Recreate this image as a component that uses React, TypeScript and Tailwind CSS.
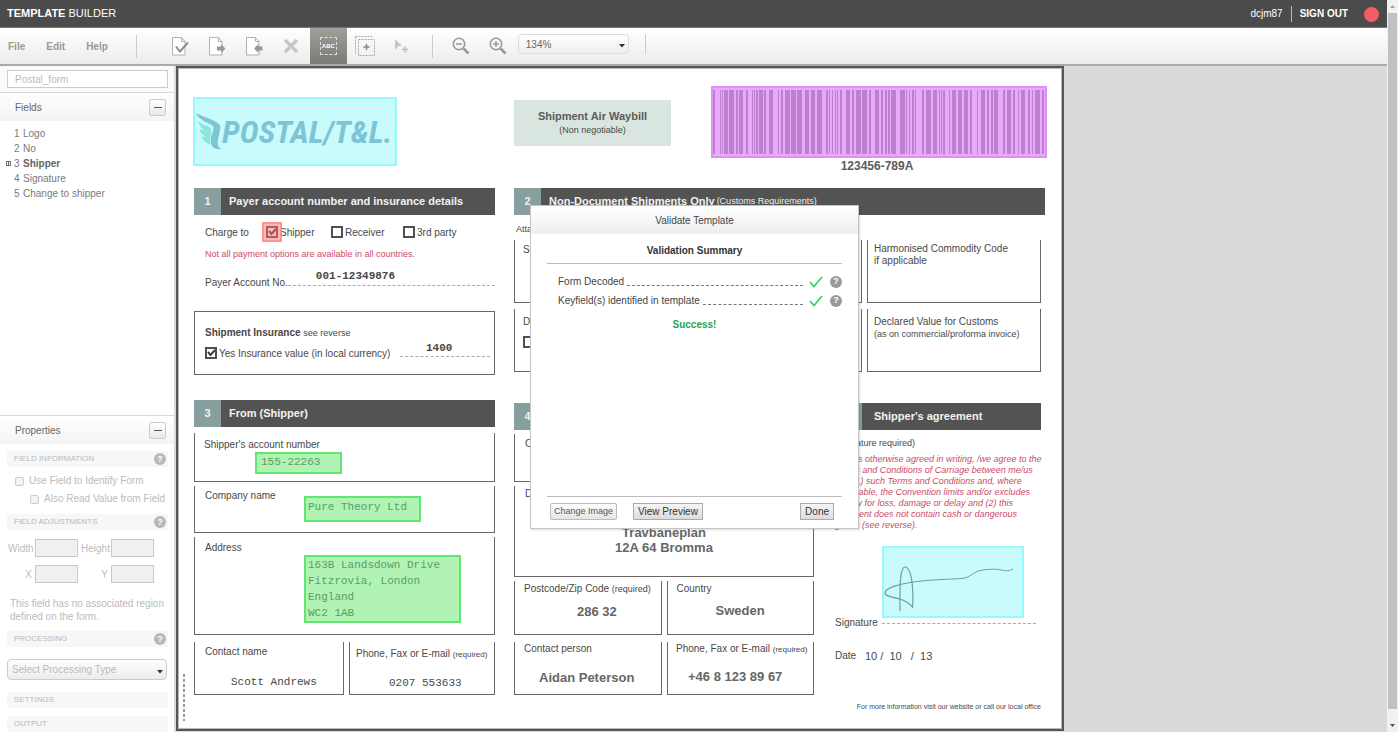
import type { ReactNode } from "react";

const bars: [number, number][] = [
  [1, 2], [8, 1], [10, 1], [12, 4], [17, 5], [24, 2], [27, 4], [34, 2], [40, 1], [42, 1], [44, 2], [47, 4], [52, 2],
  [57, 4], [66, 1], [69, 2], [73, 5], [79, 5], [85, 5], [93, 4], [99, 4], [105, 5], [114, 2], [117, 1], [120, 1],
  [123, 1], [125, 1], [128, 2], [134, 4], [140, 2], [144, 5], [150, 5], [157, 2], [163, 4], [169, 2], [173, 2],
  [176, 2], [179, 5], [188, 5], [194, 1], [197, 1], [200, 2], [203, 1], [210, 2], [214, 5], [221, 4], [227, 1],
  [229, 1], [231, 2], [237, 1], [240, 4], [246, 4], [252, 4], [258, 2], [265, 1], [269, 4], [275, 2], [279, 2],
  [282, 4], [291, 2], [295, 4], [301, 2], [306, 1], [309, 4], [316, 2], [320, 1], [323, 5], [330, 2],
];

function Doc({ children }: { children?: ReactNode }) {
  return (
    <svg width="20" height="20" viewBox="0 0 20 20" fill="none">
      <path d="M2.500 1.500h9l3.500 4v13.500H2.500z" stroke="#b0b0b0" fill="#fff" />
      <path d="M11.500 1.500v4H15" stroke="#b0b0b0" />
      {children}
    </svg>
  );
}

function ToolButton({ label, active, children }: { label: string; active?: boolean; children: ReactNode }) {
  return (
    <button
      type="button"
      aria-label={label}
      className={
        active
          ? "flex w-[37px] items-center justify-center self-stretch bg-linear-to-b from-[#a09f9b] to-[#7b7a75]"
          : "flex w-[37px] items-center justify-center self-stretch"
      }
    >
      {children}
    </button>
  );
}

function Magnifier({ plus }: { plus?: boolean }) {
  return (
    <svg width="18" height="18" viewBox="0 0 18 18" fill="none" stroke="#999">
      <circle cx="7" cy="7" r="5.700" strokeWidth="1.600" />
      <path d="M11.500 11.500l5 5" strokeWidth="2.600" />
      <path d={plus ? "M4 7h6M7 4v6" : "M4 7h6"} strokeWidth="1.500" />
    </svg>
  );
}

function Help({ pale }: { pale?: boolean }) {
  return (
    <button
      type="button"
      aria-label="Help"
      className={
        pale
          ? "flex size-3 shrink-0 items-center justify-center rounded-full bg-[#b8b8b8] text-[9px] font-bold leading-none text-white"
          : "flex size-3 shrink-0 items-center justify-center rounded-full bg-[#999] text-[9px] font-bold leading-none text-white"
      }
    >
      ?
    </button>
  );
}

function Caret() {
  return (
    <svg width="6" height="4" viewBox="0 0 6 4" className="pointer-events-none absolute top-1/2 right-1">
      <path d="M0 0h6L3 3.500z" fill="#333" />
    </svg>
  );
}

function PanelHeader({ title }: { title: string }) {
  return (
    <div className="flex h-7 shrink-0 items-center justify-between bg-linear-to-b from-white to-[#f4f4f4] pr-2 pl-[15px]">
      <h2 className="text-[10px] text-[#666]">{title}</h2>
      <button
        type="button"
        aria-label={`Collapse ${title}`}
        className="flex size-[17px] items-center justify-center rounded-xs border border-[#ccc] bg-linear-to-b from-white to-[#e8e8e8]"
      >
        <span className="h-px w-2 bg-[#555]" />
      </button>
    </div>
  );
}

function GroupBar({ title, help }: { title: string; help?: boolean }) {
  return (
    <div className="mr-[6px] ml-[7px] flex h-4 shrink-0 items-center justify-between bg-[#f7f7f7] pr-[2px] pl-[7px]">
      <h3 className="text-[8px] text-[#b9b9b9]">{title}</h3>
      {help && <Help pale />}
    </div>
  );
}

function SizeInput({ id, label }: { id: string; label: string }) {
  return (
    <>
      <label htmlFor={id} className="text-right">
        {label}
      </label>
      <input id={id} disabled className="h-[18px] w-[43px] border border-[#c8c8c8] bg-[#f0f0f0]" />
    </>
  );
}

function SectionHead({ n, children }: { n: string; children: ReactNode }) {
  return (
    <div className="flex h-[27px] items-stretch bg-[#535353] font-bold text-[#f2f2f2]">
      <span className="flex w-[27px] items-center justify-center bg-[#87a09f] text-[11px]">{n}</span>
      <h2 className="flex items-center gap-[2px] pl-2 text-[11px] whitespace-nowrap">{children}</h2>
    </div>
  );
}

function Cell({ className, children }: { className: string; children?: ReactNode }) {
  return <div className={`border-x border-b border-[#686868] text-[10px] leading-3 ${className}`}>{children}</div>;
}

function Tick({ label, checked, marked }: { label: string; checked?: boolean; marked?: boolean }) {
  return (
    <label className="relative flex items-center whitespace-nowrap">
      <input type="checkbox" defaultChecked={checked} className="peer size-3 appearance-none border-2 border-[#505050]" />
      <svg
        width="10"
        height="10"
        viewBox="0 0 10 10"
        className="pointer-events-none absolute left-[2px] hidden peer-checked:block"
      >
        <path d="M1 4l2.500 3L8 2" stroke="#404040" strokeWidth="2" fill="none" />
      </svg>
      {marked && <span className="absolute -left-1 size-5 border-2 border-[#ff8a8a]/80 bg-[#ff6b6b]/50" />}
      <span className="pl-[2px]">{label}</span>
    </label>
  );
}

function ReportRow({ text }: { text: string }) {
  return (
    <li className="flex items-center">
      <span>{text}</span>
      <span className="mx-[3px] mt-2 flex-1 border-b border-dashed border-[#777]" />
      <svg width="14" height="12" viewBox="0 0 14 12" className="mr-[7px] ml-[3px]">
        <path d="M1 6l4 4.500L13 1" fill="none" stroke="#2fcf55" strokeWidth="1.500" />
      </svg>
      <Help />
    </li>
  );
}

function ValidateDialog() {
  return (
    <div
      role="dialog"
      aria-label="Validate Template"
      className="absolute top-[137px] left-[352px] flex h-[324px] w-[329px] flex-col border border-[#c4c4c4] bg-white text-[10px] text-[#444] shadow-[1px_1px_2px_rgba(0,0,0,0.15)]"
    >
      <h2 className="flex h-7 items-center justify-center bg-linear-to-b from-white to-[#eee]">Validate Template</h2>
      <div className="mx-4 flex flex-1 flex-col">
        <h3 className="border-b border-[#bbb] pt-[9px] pb-[5px] text-center leading-[15px] font-bold text-[#333]">
          Validation Summary
        </h3>
        <ul className="mt-2 ml-[11px] leading-[19px]">
          <ReportRow text="Form Decoded" />
          <ReportRow text="Keyfield(s) identified in template" />
        </ul>
        <p className="mt-[7px] text-center font-bold text-[#22a556]">Success!</p>
      </div>
      <div className="mx-4 flex items-center border-t border-[#bbb] pt-[6px] pb-2 pr-2 pl-[3px] text-[#333]">
        <button
          type="button"
          className="h-[17px] rounded-xs border border-[#bbb] bg-linear-to-b from-white to-[#e4e4e4] px-[3px] text-[9px] text-[#555]"
        >
          Change Image
        </button>
        <button
          type="button"
          className="ml-4 h-[17px] border border-[#aaa] bg-linear-to-b from-[#f6f6f6] to-[#dcdcdc] px-1"
        >
          View Preview
        </button>
        <button
          type="button"
          className="ml-auto h-[17px] border border-[#aaa] bg-linear-to-b from-[#f6f6f6] to-[#dcdcdc] px-1"
        >
          Done
        </button>
      </div>
    </div>
  );
}

function TopBar() {
  return (
    <header className="flex h-7 shrink-0 items-center border-b border-[#777] bg-[#4b4b4b] pr-2 pl-[7px] text-[10px] text-white">
      <h1 className="text-[11px]">
        <b>TEMPLATE</b> BUILDER
      </h1>
      <span className="ml-auto">dcjm87</span>
      <span className="mx-2 h-4 w-px bg-[#bbb]" />
      <a href="#signout" className="font-bold">
        SIGN OUT
      </a>
      <span className="mt-px ml-4 size-[15px] rounded-full bg-[#f45d64]" />
    </header>
  );
}

function Toolbar() {
  return (
    <div className="flex h-[38px] shrink-0 items-center border-b-2 border-[#aaa] bg-linear-to-b from-white to-[#ececec] text-[10px]">
      <nav className="flex gap-[21px] pl-2 font-bold text-[#999]">
        <button type="button">File</button>
        <button type="button">Edit</button>
        <button type="button">Help</button>
      </nav>
      <span className="mr-[25px] ml-7 h-[23px] w-px bg-[#ccc]" />
      <ToolButton label="Validate">
        <Doc>
          <path d="M6 10.500l4 5 8-9" stroke="#8c8c8c" strokeWidth="2" />
        </Doc>
      </ToolButton>
      <ToolButton label="Export">
        <Doc>
          <path d="M10 10.500h4V8l4.500 4.500-4.500 4.500v-2.500h-4z" fill="#999" />
        </Doc>
      </ToolButton>
      <ToolButton label="Import">
        <Doc>
          <path d="M18.500 10.500h-4V8L10 12.500l4.500 4.500v-2.500h4z" fill="#999" />
        </Doc>
      </ToolButton>
      <ToolButton label="Delete">
        <svg width="16" height="16" viewBox="0 0 16 16">
          <path d="M2 2l12 12M14 2L2 14" stroke="#c6c6c6" strokeWidth="3.400" />
        </svg>
      </ToolButton>
      <ToolButton label="Text field" active>
        <span className="flex h-[18px] w-[17px] items-center justify-center border border-dashed border-[#ddd] text-[6px] font-bold text-white">
          ABC
        </span>
      </ToolButton>
      <ToolButton label="Add group">
        <svg width="20" height="20" viewBox="0 0 20 20" fill="none" stroke="#aaa">
          <path d="M.5 .5h18M.5 .5v18" strokeDasharray="2 1" />
          <path d="M3.500 3.500h16v16h-16z" strokeDasharray="2 1" />
          <path d="M8.500 11h6M11.500 8v6" stroke="#888" strokeWidth="1.500" />
        </svg>
      </ToolButton>
      <ToolButton label="Select and add">
        <svg width="16" height="16" viewBox="0 0 16 16">
          <path d="M1 1l7 7H4.500L1 12z" fill="#c4c4c4" />
          <path d="M8 11.500h6M11 8.500v6" stroke="#bbb" strokeWidth="1.500" />
        </svg>
      </ToolButton>
      <span className="mr-[10px] ml-[11px] h-[23px] w-px bg-[#ccc]" />
      <ToolButton label="Zoom out">
        <Magnifier />
      </ToolButton>
      <ToolButton label="Zoom in">
        <Magnifier plus />
      </ToolButton>
      <div className="relative mb-1 ml-px">
        <select
          aria-label="Zoom level"
          className="block h-5 w-[111px] appearance-none rounded border border-[#ddd] bg-linear-to-b from-white to-[#eee] pl-[7px] text-[#666]"
        >
          <option>134%</option>
        </select>
        <Caret />
      </div>
      <span className="mb-1 ml-4 h-5 w-px bg-[#ccc]" />
    </div>
  );
}

function Sidebar() {
  return (
    <aside className="flex w-[174px] shrink-0 flex-col overflow-hidden bg-white text-[10px] text-[#7a7a7a]">
      <div className="border-b border-[#d8d8d8] bg-[#fafafa] px-[7px] py-1">
        <input
          aria-label="Template name"
          defaultValue="Postal_form"
          className="block h-[18px] w-[161px] border border-[#ccc] bg-white pl-[7px] text-[#bbb]"
        />
      </div>
      <PanelHeader title="Fields" />
      <ul className="min-h-0 flex-1 pt-[5px] leading-[15px]">
        {["Logo", "No", "Shipper", "Signature", "Change to shipper"].map((name, i) => (
          <li key={name} className="flex items-center pl-[6px]">
            <span className="w-2">
              {name === "Shipper" && (
                <svg width="5" height="5" viewBox="0 0 5 5">
                  <path d="M.5 .5h4v4h-4zM2.500 1v3" fill="none" stroke="#666" />
                </svg>
              )}
            </span>
            <span className="w-[9px]">{i + 1}</span>
            <span className={name === "Shipper" ? "font-bold text-[#666]" : ""}>{name}</span>
          </li>
        ))}
      </ul>
      <section className="flex h-[317px] shrink-0 flex-col overflow-hidden border-t border-[#d8d8d8] text-[#bbb]">
        <PanelHeader title="Properties" />
        <div className="h-[7px] shrink-0" />
        <GroupBar title="FIELD INFORMATION" help />
        <label className="mt-[5px] flex items-center gap-[5px] pl-[15px] leading-[18px]">
          <input type="checkbox" disabled className="size-[9px] appearance-none rounded-xs border border-[#ccc] bg-[#f4f4f4]" />
          Use Field to Identify Form
        </label>
        <label className="flex items-center gap-[5px] pl-[30px] leading-[18px]">
          <input type="checkbox" disabled className="size-[9px] appearance-none rounded-xs border border-[#ccc] bg-[#f4f4f4]" />
          Also Read Value from Field
        </label>
        <div className="h-[6px] shrink-0" />
        <GroupBar title="FIELD ADJUSTMENTS" help />
        <div className="mt-[9px] grid grid-cols-[24px_43px_27px_43px] items-center gap-x-[3px] gap-y-2 pl-2">
          <SizeInput id="w" label="Width" />
          <SizeInput id="h" label="Height" />
          <SizeInput id="x" label="X" />
          <SizeInput id="y" label="Y" />
        </div>
        <p className="mt-[14px] mb-2 pl-[10px] leading-[13px]">This field has no associated region defined on the form.</p>
        <GroupBar title="PROCESSING" help />
        <div className="relative mx-[7px] my-3">
          <select
            aria-label="Processing type"
            className="block h-[21px] w-full appearance-none rounded border border-[#ccc] bg-linear-to-b from-white to-[#ececec] pl-1 text-[10px] text-[#bbb]"
          >
            <option>Select Processing Type</option>
          </select>
          <Caret />
        </div>
        <GroupBar title="SETTINGS" />
        <div className="h-2 shrink-0" />
        <GroupBar title="OUTPUT" />
      </section>
    </aside>
  );
}

const mono = "[font-family:'Liberation_Mono',monospace]";

function LeftColumn() {
  return (
    <div className="w-[301px] text-[10px]">
      <SectionHead n="1">Payer account number and insurance details</SectionHead>
      <div className="mt-[7px] flex h-5 items-center pl-[11px]">
        <span className="w-[61px]">Charge to</span>
        <span className="w-[65px]">
          <Tick label="Shipper" checked marked />
        </span>
        <span className="w-[72px]">
          <Tick label="Receiver" />
        </span>
        <Tick label="3rd party" />
      </div>
      <p className="mt-[5px] pl-[11px] text-[9px] leading-[14px] text-[#cc4a68]">
        Not all payment options are available in all countries.
      </p>
      <div className="mt-[5px] flex h-[23px] items-end pl-[11px]">
        <span className="leading-3">Payer Account No.</span>
        <span
          className={`mb-[3px] flex-1 border-b border-dashed border-[#aaa] pb-[2px] pl-7 text-[11px] leading-[14px] font-bold ${mono}`}
        >
          001-12349876
        </span>
      </div>
      <div className="mt-[22px] flex h-16 flex-col border border-[#686868] pt-[13px] pl-[10px]">
        <p className="leading-[15px]">
          <b>Shipment Insurance</b> <span className="text-[9px]">see reverse</span>
        </p>
        <div className="mt-[3px] flex h-[18px] items-center pr-1">
          <Tick label="Yes Insurance value (in local currency)" checked />
          <span
            className={`mb-[5px] ml-auto w-[90px] self-end border-b border-dashed border-[#aaa] pb-[2px] pl-[26px] text-[11px] leading-3 font-bold ${mono}`}
          >
            1400
          </span>
        </div>
      </div>
      <div className="h-[25px]" />
      <SectionHead n="3">From (Shipper)</SectionHead>
      <Cell className="mt-[6px] h-[49px] pt-[6px] pl-[9px]">
        Shipper's account number
        <p className={`mt-px ml-[51px] h-[22px] w-[87px] border-2 border-[#63e571] bg-[#b0f3b4] pl-1 text-[11px] leading-4 text-[#5a9e62] ${mono}`}>
          155-22263
        </p>
      </Cell>
      <Cell className="mt-1 flex h-[47px] pt-1 pl-[10px]">
        <span className="w-[99px]">Company name</span>
        <p className={`mt-[6px] h-[26px] w-[117px] border-2 border-[#63e571] bg-[#b0f3b4] pl-[2px] text-[11px] leading-[18px] text-[#5a9e62] ${mono}`}>
          Pure Theory Ltd
        </p>
      </Cell>
      <Cell className="mt-1 flex h-[98px] pt-[5px] pl-[10px]">
        <span className="w-[99px]">Address</span>
        <p className={`mt-[13px] h-[68px] w-[157px] border-2 border-[#63e571] bg-[#b0f3b4] pl-[2px] text-[11px] leading-4 text-[#5a9e62] ${mono}`}>
          163B Landsdown Drive
          <br />
          Fitzrovia, London
          <br />
          England
          <br />
          WC2 1AB
        </p>
      </Cell>
      <div className="mt-[7px] flex gap-[5px]">
        <Cell className="h-[53px] flex-1 pt-1 pl-[10px]">
          Contact name
          <p className={`mt-[18px] pl-[26px] text-[11px] ${mono}`}>Scott Andrews</p>
        </Cell>
        <Cell className="h-[53px] flex-1 pt-[6px] pl-[6px] whitespace-nowrap">
          Phone, Fax or E-mail <span className="text-[8px]">(required)</span>
          <p className={`mt-4 pl-[33px] text-[11px] ${mono}`}>0207 553633</p>
        </Cell>
      </div>
    </div>
  );
}

function GoodsSection() {
  return (
    <section>
      <SectionHead n="2">
        Non-Document Shipments Only <span className="text-[9px] font-normal">(Customs Requirements)</span>
      </SectionHead>
      <p className="mt-2 h-[17px] pl-[2px] text-[9px] leading-3">Attach</p>
      <div className="flex gap-[5px] pr-1">
        <Cell className="h-[63px] flex-1 pt-1 pl-2">Shipment</Cell>
        <Cell className="h-[63px] w-[174px] pt-[3px] pl-[6px]">
          Harmonised Commodity Code
          <br />
          if applicable
        </Cell>
      </div>
      <div className="mt-[6px] flex gap-[5px] pr-1">
        <Cell className="flex h-[63px] flex-1 flex-col gap-2 pt-[7px] pl-2">
          Duties
          <Tick label="Yes" />
        </Cell>
        <Cell className="h-[63px] w-[174px] pt-[7px] pl-[6px]">
          Declared Value for Customs
          <p className="text-[9px]">(as on commercial/proforma invoice)</p>
        </Cell>
      </div>
    </section>
  );
}

function ReceiverSection() {
  return (
    <section className="w-[300px]">
      <SectionHead n="4">To (Receiver)</SectionHead>
      <Cell className="mt-1 h-[48px] pt-1 pl-[10px]">Company</Cell>
      <Cell className="mt-1 flex h-[91px] flex-col pt-[2px] pl-[10px]">
        Delivery
        <p className="mt-[25px] pr-[10px] text-center text-[13px] leading-[15px] font-bold text-[#666]">
          Travbaneplan
          <br />
          12A 64 Bromma
        </p>
      </Cell>
      <div className="mt-1 flex gap-[5px]">
        <Cell className="h-[54px] flex-1 pt-[2px] pl-[9px] whitespace-nowrap">
          Postcode/Zip Code <span className="text-[9px]">(required)</span>
          <p className="mt-[11px] pl-[53px] text-[13px] font-bold text-[#666]">286 32</p>
        </Cell>
        <Cell className="h-[54px] flex-1 pt-[2px] pl-[9px]">
          Country
          <p className="mt-[10px] pl-[39px] text-[13px] font-bold text-[#666]">Sweden</p>
        </Cell>
      </div>
      <div className="mt-[7px] flex gap-[5px]">
        <Cell className="h-[53px] flex-1 pt-px pl-[9px]">
          Contact person
          <p className="mt-[17px] pl-[15px] text-[13px] font-bold text-[#666]">Aidan Peterson</p>
        </Cell>
        <Cell className="h-[53px] flex-1 pt-px pl-2 whitespace-nowrap">
          Phone, Fax or E-mail <span className="text-[8px]">(required)</span>
          <p className="mt-[15px] pl-3 text-[13px] font-bold text-[#666]">+46 8 123 89 67</p>
        </Cell>
      </div>
    </section>
  );
}

function AgreementSection() {
  return (
    <section className="flex w-[206px] flex-col text-[10px] whitespace-nowrap">
      <SectionHead n="5">
        <span className="pl-1">Shipper's agreement</span>
      </SectionHead>
      <p className="mt-[6px] text-[9px] leading-[14px]">(Signature required)</p>
      <p className="mt-1 text-[9px] leading-[11px] text-[#cc4a68] italic">
        Unless otherwise agreed in writing, /we agree to the
        <br />
        Terms and Conditions of Carriage between me/us
        <br />
        that (1) such Terms and Conditions and, where
        <br />
        applicable, the Convention limits and/or excludes
        <br />
        liability for loss, damage or delay and (2) this
        <br />
        shipment does not contain cash or dangerous
        <br />
        goods (see reverse).
      </p>
      <div className="mt-[15px] ml-[47px] h-[72px] w-[142px] border-2 border-[#93fafd] bg-[#c9fbfc]">
        <svg width="138" height="68" viewBox="2 2 138 68" fill="none" stroke="#6f9da3">
          <path
            d="M18 65V48C18 35 19 21 23 21c4 0 6 8 7 15 1 9 1 20 .5 25C27 57 24 55 18 53 12 51 3 51 3 47c0-5 15-9 25-10.500"
            strokeWidth="1.200"
          />
          <path d="M28 36.500C42 34 70 33 80 32.500c9-1 10-6 18-8 8-1.500 15-1.500 19-1 5 1 9 2.500 14-.5" />
        </svg>
      </div>
      <div className="flex h-3 items-start">
        <span className="leading-[10px]">Signature</span>
        <span className="mt-[5px] mr-[5px] ml-1 flex-1 border-b border-dashed border-[#aaa]" />
      </div>
      <p className="mt-[18px] flex items-center leading-4">
        <span className="w-[30px]">Date</span>
        <span className="text-[11px] whitespace-pre">10 /  10   /  13</span>
      </p>
      <p className="mt-[38px] text-right text-[7px]">For more information visit our website or call our local office</p>
    </section>
  );
}

function FormPage() {
  return (
    <div className="relative ml-[2px] w-[888px] shrink-0 self-start border-2 border-[#555] bg-white pb-4 pl-[15px] text-[#484848] shadow-[inset_0_0_0_1px_#bbb]">
      <div className="flex h-[120px] items-start">
        <div className="mt-[29px] flex h-[69px] w-[204px] items-center border-2 border-[#93fafd] bg-[#c9fbfc] text-[#7dc4d6]">
          <svg width="27" height="40" viewBox="0 0 27 40" className="shrink-0 overflow-visible">
            <path
              d="M1 1C8 5 15 6 21 10c4 2 5 4 4 8-1 6-3 11-2 15 1 3 3 4 5 4h-6c-5-1-7-5-6-11 1-6 4-9 2-12C15 11 4 9 1 1z"
              fill="currentColor"
            />
            <path
              d="M3 9c5 5 11 4 13 8 1 4-1 9-1 16-5-3-8-6-9-9 2 1 4 1 5 1-4-2-6-5-7-8 2 1 4 1 5 1C6 16 4 13 3 9z"
              fill="#8fe5dd"
            />
          </svg>
          <span className="text-[32px] leading-none font-bold italic [font-family:'Roboto_Condensed','Liberation_Sans_Narrow','Liberation_Sans',sans-serif]">
            POSTAL/T&amp;L.
          </span>
        </div>
        <div className="mt-8 ml-[117px] flex h-[46px] w-[157px] flex-col items-center bg-[#d8e6df] pt-2">
          <h1 className="text-[11px] leading-4 font-bold text-[#5c5c5c]">Shipment Air Waybill</h1>
          <p className="text-[9px] leading-3">(Non negotiable)</p>
        </div>
        <div className="mt-[18px] ml-10 w-[336px]">
          <div className="border-2 border-[#df8ff5] bg-[#e8abf9]">
            <svg width="332" height="68" viewBox="1 0 332 68" className="block">
              {bars.map(([x, w]) => (
                <rect key={x} x={x} y="2" width={w} height="64" fill="#bd80cf" />
              ))}
            </svg>
          </div>
          <p className="pr-1 text-center text-[12px] leading-4 font-bold text-[#5c5c5c]">123456-789A</p>
        </div>
      </div>
      <div className="flex gap-[19px] pl-px">
        <LeftColumn />
        <div className="w-[531px]">
          <GoodsSection />
          <div className="mt-[31px] flex gap-[21px]">
            <ReceiverSection />
            <AgreementSection />
          </div>
        </div>
      </div>
      <span className="absolute bottom-2 left-[5px] h-[47px] w-[2px] bg-[repeating-linear-gradient(to_bottom,#999_0_3px,transparent_3px_5px)]" />
      <ValidateDialog />
    </div>
  );
}

export default function App() {
  return (
    <div className="flex h-screen overflow-hidden bg-white [font-family:'Liberation_Sans',Arial,sans-serif]">
      <div className="flex min-w-0 flex-1 flex-col">
        <TopBar />
        <Toolbar />
        <div className="flex min-h-0 flex-1">
          <Sidebar />
          <main className="flex min-w-0 flex-1 overflow-hidden bg-[#dadada]">
            <FormPage />
          </main>
        </div>
      </div>
      <div className="flex w-[11px] shrink-0 flex-col items-center bg-[#f1f1f1]">
        <svg width="7" height="13" viewBox="0 0 7 13">
          <path d="M1 8h5L3.500 5z" fill="#a0a0a0" />
        </svg>
        <div className="w-[9px] flex-1 bg-[#c1c1c1]" />
        <svg width="7" height="23" viewBox="0 0 7 23">
          <path d="M1 15h5l-2.500 3z" fill="#505050" />
        </svg>
      </div>
    </div>
  );
}
